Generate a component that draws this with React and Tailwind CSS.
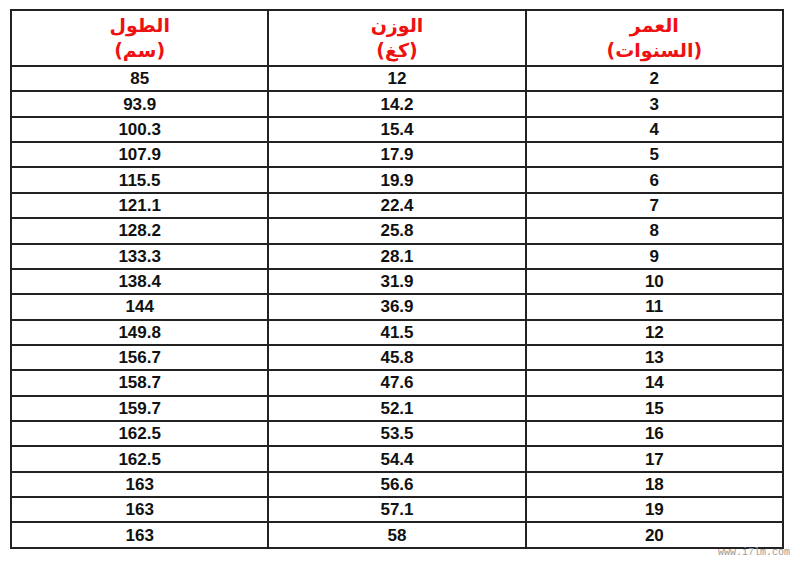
const rows = [
  [2, 12, 85],
  [3, 14.2, 93.9],
  [4, 15.4, 100.3],
  [5, 17.9, 107.9],
  [6, 19.9, 115.5],
  [7, 22.4, 121.1],
  [8, 25.8, 128.2],
  [9, 28.1, 133.3],
  [10, 31.9, 138.4],
  [11, 36.9, 144],
  [12, 41.5, 149.8],
  [13, 45.8, 156.7],
  [14, 47.6, 158.7],
  [15, 52.1, 159.7],
  [16, 53.5, 162.5],
  [17, 54.4, 162.5],
  [18, 56.6, 163],
  [19, 57.1, 163],
  [20, 58, 163],
];

const headers = [
  ['العمر', '(السنوات)'],
  ['الوزن', '(كغ)'],
  ['الطول', '(سم)'],
];

export default function App() {
  return (
    <div className="w-[800px] h-[568px] bg-white relative overflow-hidden">
      <div className="pt-[9px] pl-[10px]">
        <table dir="rtl" className="w-[774px] border-collapse border-2 border-[#222] table-fixed">
          <thead>
            <tr className="h-[56px]">
              {headers.map((h, i) => (
                <th
                  key={i}
                  className="border-2 border-[#222] text-[#ee1111] font-bold text-[19px] leading-[25px] pb-[1px]"
                  style={{ fontFamily: '"DejaVu Sans", sans-serif' }}
                >
                  <div>{h[0]}</div>
                  <div>{h[1]}</div>
                </th>
              ))}
            </tr>
          </thead>
          <tbody>
            {rows.map((r, i) => (
              <tr key={i} className="h-[25.37px]">
                {r.map((v, j) => (
                  <td
                    key={j}
                    className="border-2 border-[#222] text-center font-bold text-[17px] leading-none text-[#111] p-0 font-['Liberation_Sans',sans-serif]"
                  >
                    {v}
                  </td>
                ))}
              </tr>
            ))}
          </tbody>
        </table>
      </div>
      {/* watermark */}
      <div className="absolute left-[718px] top-[547px] text-[10px] leading-[12px] text-[#9a9a9a] font-['Liberation_Mono',monospace]">
        www.i7lm.com
      </div>
    </div>
  );
}
